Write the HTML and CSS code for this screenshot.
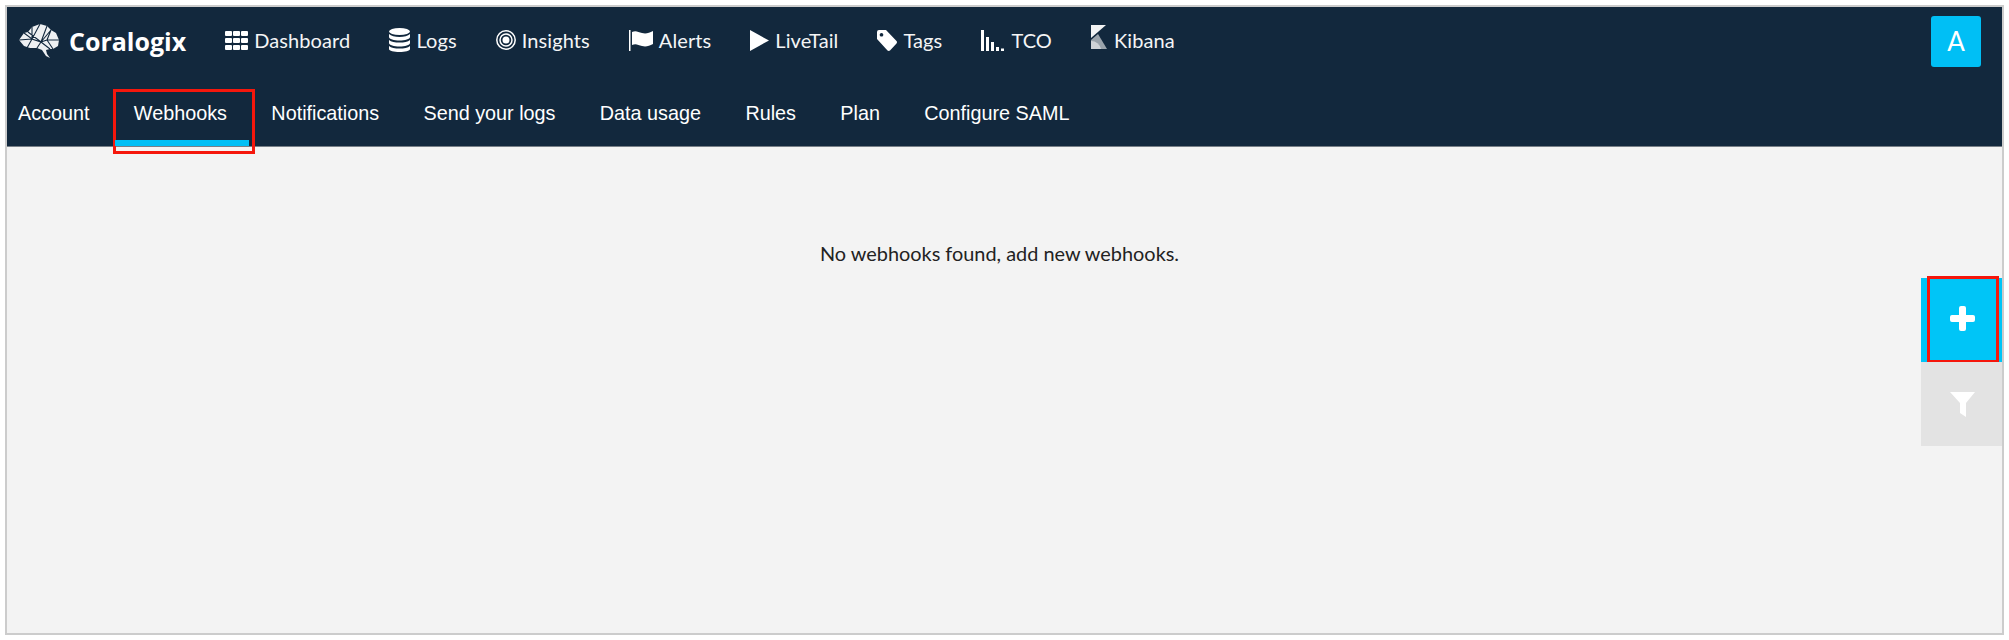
FILE: index.html
```html
<!DOCTYPE html>
<html lang="en">
<head>
    <meta charset="UTF-8">
    <title>Coralogix - Webhooks</title>
    <link rel="stylesheet" href="styles.css">
</head>
<body>
    <div class="frame">
        <header class="header">
            <div class="topbar">
                <a class="logo">
                    <svg class="brain" width="42" height="36" viewBox="0 0 42 36">
                        <path fill="#eef0f2" d="M1 17 6 10l4-1 4-5 8-3 7 2 4 4 5 3 3 7-1 6-5 3h-3l-4 1 1 4 3 4-4-2-4-6-5-2h-7l-6-2z"/>
                        <path fill="none" stroke="#12283d" stroke-width="1.100" d="M6 10l8 6 8-15M14 4l0 12 9 3 6-16M14 16l-5 9M1 17l13-1M23 19l-4 6M23 19l10-12M23 19l9 7M33 7l-4 10 12 0M29 17l6 9M29 17l-6 2M10 9l13 10"/>
                    </svg>
                    <span>Coralogix</span>
                </a>
                <nav class="mainnav">
                    <a class="navitem">
                        <svg width="23" height="19" viewBox="0 0 23 19"><path fill="#fff" d="M1 0h5a1 1 0 0 1 1 1v3a1 1 0 0 1-1 1H1a1 1 0 0 1-1-1V1a1 1 0 0 1 1-1zM9 0h5a1 1 0 0 1 1 1v3a1 1 0 0 1-1 1H9a1 1 0 0 1-1-1V1a1 1 0 0 1 1-1zM17 0h5a1 1 0 0 1 1 1v3a1 1 0 0 1-1 1h-5a1 1 0 0 1-1-1V1a1 1 0 0 1 1-1zM1 7h5a1 1 0 0 1 1 1v3a1 1 0 0 1-1 1H1a1 1 0 0 1-1-1V8a1 1 0 0 1 1-1zM9 7h5a1 1 0 0 1 1 1v3a1 1 0 0 1-1 1H9a1 1 0 0 1-1-1V8a1 1 0 0 1 1-1zM17 7h5a1 1 0 0 1 1 1v3a1 1 0 0 1-1 1h-5a1 1 0 0 1-1-1V8a1 1 0 0 1 1-1zM1 14h5a1 1 0 0 1 1 1v3a1 1 0 0 1-1 1H1a1 1 0 0 1-1-1v-3a1 1 0 0 1 1-1zM9 14h5a1 1 0 0 1 1 1v3a1 1 0 0 1-1 1H9a1 1 0 0 1-1-1v-3a1 1 0 0 1 1-1zM17 14h5a1 1 0 0 1 1 1v3a1 1 0 0 1-1 1h-5a1 1 0 0 1-1-1v-3a1 1 0 0 1 1-1z"/></svg>
                        Dashboard
                    </a>
                    <a class="navitem">
                        <svg width="21" height="24" viewBox="0 0 21 24"><g fill="#fff"><ellipse cx="10.500" cy="3.500" rx="10.500" ry="3.500"/><path d="M0 6c2 2 6 3 10.500 3S19 8 21 6v3c0 2-5 3.500-10.500 3.500S0 11 0 9zM0 12c2 2 6 2.500 10.500 2.500S19 14 21 12v3c0 2-5 3.500-10.500 3.500S0 17 0 15z"/><path d="M0 18c2 2 6 2.500 10.500 2.500S19 20 21 18v3c0 2-5 3-10.500 3S0 23 0 21z"/></g></svg>
                        Logs
                    </a>
                    <a class="navitem">
                        <svg width="20" height="20" viewBox="0 0 20 20"><g fill="none" stroke="#fff"><circle cx="10" cy="10" r="9.200" stroke-width="1.500"/><circle cx="10" cy="10" r="6" stroke-width="1.500"/></g><circle cx="10" cy="10" r="3.500" fill="#fff"/></svg>
                        Insights
                    </a>
                    <a class="navitem">
                        <svg width="24" height="21" viewBox="0 0 24 21"><path fill="#fff" d="M0 0h1.500v21H0zM3 2c4-2 6 0 10 1 4 1 7 0 11-2v13c-4 2-7 3-11 2-4-1-6-3-10-1z"/></svg>
                        Alerts
                    </a>
                    <a class="navitem">
                        <svg width="19" height="21" viewBox="0 0 19 21"><path fill="#fff" d="M0 0 19 10.500 0 21z"/></svg>
                        LiveTail
                    </a>
                    <a class="navitem">
                        <svg width="20" height="21" viewBox="0 0 20 21"><path fill="#fff" fill-rule="evenodd" d="M2 0h7l10.500 11a2 2 0 0 1 0 2.500L13 20.500a2 2 0 0 1-2.500 0L0 9V2a2 2 0 0 1 2-2zM4.500 3a1.800 1.800 0 1 0 .01 0z"/></svg>
                        Tags
                    </a>
                    <a class="navitem">
                        <svg width="24" height="21" viewBox="0 0 24 21"><path fill="#fff" d="M0 0h3v21H0zM5 7h3v14H5zM10 12h3v9h-3zM15 17h3v4h-3zM20 18.500h3V21h-3z"/></svg>
                        TCO
                    </a>
                    <a class="navitem kibana">
                        <svg width="17" height="24" viewBox="0 0 17 24"><path fill="#f2f3f4" d="M0 0h15L0 13z"/><path fill="#9aa3ab" d="M0 15 7 9l9 15H0z"/><path fill="#cfd3d7" d="M0 16v8h10a10 10 0 0 0-10-8z"/></svg>
                        Kibana
                    </a>
                </nav>
                <div class="avatar">A</div>
            </div>
            <nav class="tabs">
                <a class="tab">Account</a>
                <a class="tab active">Webhooks</a>
                <a class="tab">Notifications</a>
                <a class="tab">Send your logs</a>
                <a class="tab">Data usage</a>
                <a class="tab">Rules</a>
                <a class="tab">Plan</a>
                <a class="tab">Configure SAML</a>
            </nav>
        </header>
        <main class="content">
            <p class="empty">No webhooks found, add new webhooks.</p>
            <div class="sidebtns">
                <button class="sidebtn add">
                    <svg width="25" height="25" viewBox="0 0 25 25"><path fill="#fff" d="M9 2a2 2 0 0 1 2-2h3a2 2 0 0 1 2 2v7h7a2 2 0 0 1 2 2v3a2 2 0 0 1-2 2h-7v7a2 2 0 0 1-2 2h-3a2 2 0 0 1-2-2v-7H2a2 2 0 0 1-2-2v-3a2 2 0 0 1 2-2h7z"/></svg>
                </button>
                <button class="sidebtn filter">
                    <svg width="25" height="25" viewBox="0 0 25 25"><path fill="#fff" d="M0 0h25l-9 11v14l-6-4V11z"/></svg>
                </button>
            </div>
        </main>
    </div>
</body>
</html>
```

FILE: styles.css
```css
* {
    box-sizing: border-box;
}
body {
    margin: 0;
    background: white;
    padding: 5px;
    font-family: "Lato", "Liberation Sans", sans-serif;
}
.frame {
    position: relative;
    width: 1999px;
    height: 630px;
    border: 2px solid #cccccc;
    display: flex;
    flex-direction: column;
    background: #f3f3f3;
}
.header {
    height: 140px;
    background: #12283d;
    border-bottom: 1px solid #777f87;
    color: white;
}
.topbar {
    height: 68px;
    display: flex;
    align-items: center;
    padding: 0 21px 0 11px;
}
.logo {
    display: flex;
    align-items: center;
    gap: 9px;
    margin-right: 39px;
    font-family: "Open Sans", sans-serif;
    font-size: 25px;
    font-weight: 700;
}
.mainnav {
    display: flex;
    align-items: center;
    gap: 39px;
    padding-bottom: 2px;
}
.navitem {
    display: flex;
    align-items: center;
    gap: 6px;
    font-size: 20px;
    letter-spacing: 0.1px;
    color: #f4f5f6;
}
.kibana svg {
    margin-top: -6px;
}
.avatar {
    margin-left: auto;
    width: 50px;
    height: 51px;
    border-radius: 3px;
    background: #00bff5;
    display: flex;
    align-items: center;
    justify-content: center;
    font-size: 26px;
}
.tabs {
    display: flex;
    height: 71px;
    padding-left: 11px;
    font-family: "Liberation Sans", Arial, sans-serif;
    font-size: 19.800px;
}
.tab {
    position: relative;
    display: flex;
    align-items: center;
    padding: 5px 22.200px 0;
}
.tab:first-child {
    padding-left: 0;
}
.tab.active::after {
    content: "";
    position: absolute;
    left: 3px;
    right: 0;
    bottom: 0;
    height: 6px;
    background: #00bff5;
}
/* caja roja de la captura */
.tab.active::before {
    content: "";
    position: absolute;
    left: 1px;
    right: -6px;
    top: 14px;
    bottom: -8px;
    border: 3px solid #f5170c;
}
.content {
    flex: 1;
    position: relative;
}
.empty {
    margin: 94px 0 0;
    padding-right: 10px;
    text-align: center;
    font-size: 19.900px;
    color: #222222;
}
.sidebtns {
    position: absolute;
    top: 131px;
    right: 0;
    width: 81px;
    display: flex;
    flex-direction: column;
}
.sidebtn {
    position: relative;
    border: none;
    padding: 0;
    display: flex;
    align-items: center;
    justify-content: center;
}
.add {
    height: 84px;
    background: #00c5f7;
    padding: 0 0 3px 2px;
}
.add::after {
    content: "";
    position: absolute;
    left: 6px;
    right: 3px;
    top: -2px;
    bottom: -1px;
    border: 3px solid #f5170c;
}
.filter {
    height: 84px;
    background: #e3e3e3;
    padding-left: 2px;
}
```
